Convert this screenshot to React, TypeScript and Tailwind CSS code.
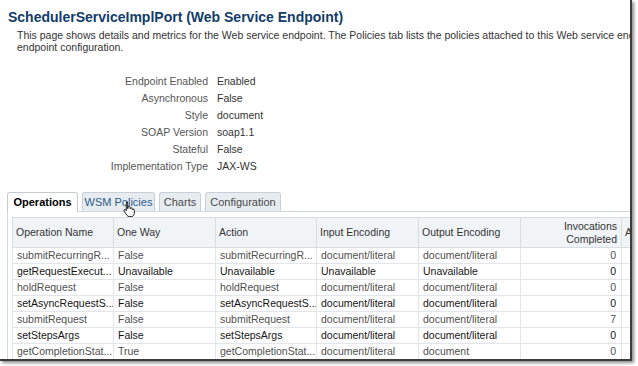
import { clsx } from 'clsx'

const props: [string, string][] = [
  ['Endpoint Enabled', 'Enabled'],
  ['Asynchronous', 'False'],
  ['Style', 'document'],
  ['SOAP Version', 'soap1.1'],
  ['Stateful', 'False'],
  ['Implementation Type', 'JAX-WS'],
]

const rows: string[][] = [
  ['submitRecurringR...', 'False', 'submitRecurringR...', 'document/literal', 'document/literal', '0'],
  ['getRequestExecut...', 'Unavailable', 'Unavailable', 'Unavailable', 'Unavailable', '0'],
  ['holdRequest', 'False', 'holdRequest', 'document/literal', 'document/literal', '0'],
  ['setAsyncRequestS...', 'False', 'setAsyncRequestS...', 'document/literal', 'document/literal', '0'],
  ['submitRequest', 'False', 'submitRequest', 'document/literal', 'document/literal', '7'],
  ['setStepsArgs', 'False', 'setStepsArgs', 'document/literal', 'document/literal', '0'],
  ['getCompletionStat...', 'True', 'getCompletionStat...', 'document/literal', 'document', '0'],
  ['', '', '', '', '', ''],
]

function HandCursor() {
  return (
    <svg width="13" height="16" viewBox="0 0 13 16" className="absolute left-[123px] top-[201px]">
      <path
        d="M3.5 1.2c.7 0 1.2.5 1.2 1.2v5.2l.3-.1V6.4c0-.6.5-1 1.1-1s1.1.5 1.1 1v1.2c.1-.5.5-.8 1-.8.6 0 1.1.5 1.1 1v.9c.2-.4.5-.6 1-.6.6 0 1 .5 1 1.1v3.1c0 1.9-1.3 3.3-3.2 3.3H6.3c-1 0-1.8-.5-2.4-1.3L1.2 10.1c-.4-.5-.3-1.1.2-1.4.4-.3 1-.2 1.3.2l.6.8V2.4c0-.7.5-1.2 1.2-1.2z"
        fill="#fff"
        stroke="#000"
        strokeWidth="0.9"
      />
    </svg>
  )
}

export default function App() {
  return (
    <div className="w-[638px] h-[366px] bg-white overflow-hidden font-['Liberation_Sans',Arial,sans-serif]">
      <div className="relative w-[632px] h-[361px] overflow-hidden border-r-2 border-b-2 border-[#3c3c3c] shadow-[2px_2px_3px_rgba(0,0,0,0.45)] bg-white">
        {/* Title */}
        <div className="pl-[8px] pt-[8px] text-[14px] leading-[18px] font-bold text-[#123c69] whitespace-nowrap">
          SchedulerServiceImplPort (Web Service Endpoint)
        </div>
        <div className="pl-[17px] mt-[3px] text-[10.5px] leading-[12px] text-[#333] whitespace-nowrap">
          <div>
            This page shows details and metrics for the Web service endpoint. The Policies tab lists the policies attached to this Web service end
          </div>
          <div>endpoint configuration.</div>
        </div>

        {/* Properties */}
        <div className="mt-[20px] grid grid-cols-[208px_auto] gap-x-[9px] text-[10.5px] leading-[17px]">
          {props.map(([k, v]) => (
            <div key={k} className="contents">
              <div className="text-right text-[#555]">{k}</div>
              <div className="text-[#333]">{v}</div>
            </div>
          ))}
        </div>

        {/* Tabs */}
        <div className="mt-[17px] flex items-end gap-[4px] pl-[7px] text-[11px]">
          <div className="relative z-10 -mb-px h-[20px] w-[71px] flex items-center justify-center rounded-t-[3px] border border-b-0 border-[#c4cbd2] bg-white font-bold text-black">
            Operations
          </div>
          <div className="h-[19px] w-[73px] flex items-center justify-center rounded-t-[3px] border border-b-0 border-[#c8cfd6] bg-[#e7ecf1] text-[#2d5b8c]">
            WSM Policies
          </div>
          <div className="h-[19px] w-[42px] flex items-center justify-center rounded-t-[3px] border border-b-0 border-[#c8cfd6] bg-[#e7ecf1] text-[#4a4a4a]">
            Charts
          </div>
          <div className="h-[19px] w-[76px] flex items-center justify-center rounded-t-[3px] border border-b-0 border-[#c8cfd6] bg-[#e7ecf1] text-[#4a4a4a]">
            Configuration
          </div>
        </div>

        {/* Panel */}
        <div className="ml-[7px] border-t border-l border-[#cfd6dc] pt-[5px] pl-[4px]">
          <table className="table-fixed border-collapse text-[10.5px] w-[640px]">
            <colgroup>
              <col className="w-[101px]" />
              <col className="w-[102px]" />
              <col className="w-[101px]" />
              <col className="w-[102px]" />
              <col className="w-[102px]" />
              <col className="w-[101px]" />
              <col className="w-[31px]" />
            </colgroup>
            <thead>
              <tr className="h-[30px] bg-[#f1f4f7] text-[#333]">
                <th className="border border-[#d8dde2] px-[3px] text-left font-normal">Operation Name</th>
                <th className="border border-[#d8dde2] px-[3px] text-left font-normal">One Way</th>
                <th className="border border-[#d8dde2] px-[3px] text-left font-normal">Action</th>
                <th className="border border-[#d8dde2] px-[3px] text-left font-normal">Input Encoding</th>
                <th className="border border-[#d8dde2] px-[3px] text-left font-normal">Output Encoding</th>
                <th className="border border-[#d8dde2] pr-[4px] text-right font-normal leading-[13px]">
                  Invocations
                  <br />
                  Completed
                </th>
                <th className="border border-[#d8dde2] px-[3px] text-left font-normal">A</th>
              </tr>
            </thead>
            <tbody>
              {rows.map((r, i) => (
                <tr
                  key={i}
                  className={clsx('h-[16px] leading-[15px]', i % 2 === 0 ? 'text-[#505050]' : 'text-[#151515]')}
                >
                  {r.map((c, j) => (
                    <td
                      key={j}
                      className={clsx(
                        'border border-[#e2e6ea] whitespace-nowrap overflow-hidden',
                        j === 5 ? 'text-right pr-[5px]' : 'pl-[4px]',
                      )}
                    >
                      {c}
                    </td>
                  ))}
                  <td className="border border-[#e2e6ea]" />
                </tr>
              ))}
            </tbody>
          </table>
        </div>
        <HandCursor />
      </div>
    </div>
  )
}
